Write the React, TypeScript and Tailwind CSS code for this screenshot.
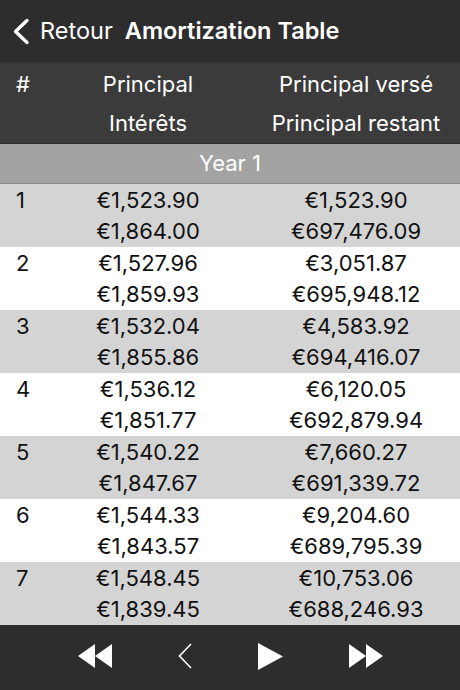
interface Row {
  n: number;
  principal: string;
  interest: string;
  paid: string;
  remaining: string;
}

const rows: Row[] = [
  { n: 1, principal: '€1,523.90', interest: '€1,864.00', paid: '€1,523.90', remaining: '€697,476.09' },
  { n: 2, principal: '€1,527.96', interest: '€1,859.93', paid: '€3,051.87', remaining: '€695,948.12' },
  { n: 3, principal: '€1,532.04', interest: '€1,855.86', paid: '€4,583.92', remaining: '€694,416.07' },
  { n: 4, principal: '€1,536.12', interest: '€1,851.77', paid: '€6,120.05', remaining: '€692,879.94' },
  { n: 5, principal: '€1,540.22', interest: '€1,847.67', paid: '€7,660.27', remaining: '€691,339.72' },
  { n: 6, principal: '€1,544.33', interest: '€1,843.57', paid: '€9,204.60', remaining: '€689,795.39' },
  { n: 7, principal: '€1,548.45', interest: '€1,839.45', paid: '€10,753.06', remaining: '€688,246.93' },
];

function AmortRow({ n, principal, interest, paid, remaining }: Row) {
  return (
    <div className={`grid grid-cols-[44px_1fr_1fr] h-[63px] pt-[1px] text-[22px] leading-[31px] text-[#111] ${n % 2 ? 'bg-[#d4d4d4]' : 'bg-white'}`}>
      <div className="pl-4">{n}</div>
      <div className="text-center">
        <div>{principal}</div>
        <div>{interest}</div>
      </div>
      <div className="text-center">
        <div>{paid}</div>
        <div>{remaining}</div>
      </div>
    </div>
  );
}

export default function App() {
  return (
    <div className="w-[460px] h-[690px] flex flex-col bg-white font-['Inter',sans-serif] overflow-hidden">
      <div className="h-[63px] bg-[#2d2d2d] flex items-center text-white text-[23.5px] pb-[1px]">
        <svg width="20" height="27" viewBox="0 0 20 27" fill="none" stroke="white" strokeWidth="3.4" strokeLinecap="round" strokeLinejoin="round" className="ml-[11px] mr-[9px]">
          <path d="M16 2.5 L4.5 13.5 L16 24.5" />
        </svg>
        <span>Retour</span>
        <span className="ml-[12px] font-semibold">Amortization Table</span>
      </div>
      <div className="h-[80px] bg-[#3b3b3b] text-white text-[22px] grid grid-cols-[44px_1fr_1fr] pt-[2px] leading-[39px]">
        <div className="pl-4">#</div>
        <div className="text-center">
          <div>Principal</div>
          <div>Intérêts</div>
        </div>
        <div className="text-center">
          <div>Principal versé</div>
          <div>Principal restant</div>
        </div>
      </div>
      <div className="h-[41px] bg-[#a3a3a3] border-t border-[#2a2a2a] border-b border-b-[#8a8a8a] flex items-center justify-center text-white text-[22px]">
        Year 1
      </div>
      {rows.map((r) => (
        <AmortRow key={r.n} {...r} />
      ))}
      <div className="flex-1 bg-[#2d2d2d] flex items-center justify-center gap-[66px] pb-[3px]">
        <svg width="34" height="24" viewBox="0 0 34 24" fill="white">
          <path d="M0 12 L17 0 V24 Z" />
          <path d="M17 12 L34 0 V24 Z" />
        </svg>
        <svg width="14" height="26" viewBox="0 0 14 26" fill="none" stroke="white" strokeWidth="1.6">
          <path d="M13 1 L1.5 13 L13 25" />
        </svg>
        <svg width="25" height="27" viewBox="0 0 25 27" fill="white">
          <path d="M0 0 L25 13.5 L0 27 Z" />
        </svg>
        <svg width="34" height="24" viewBox="0 0 34 24" fill="white">
          <path d="M0 0 L17 12 L0 24 Z" />
          <path d="M17 0 L34 12 L17 24 Z" />
        </svg>
      </div>
    </div>
  );
}
